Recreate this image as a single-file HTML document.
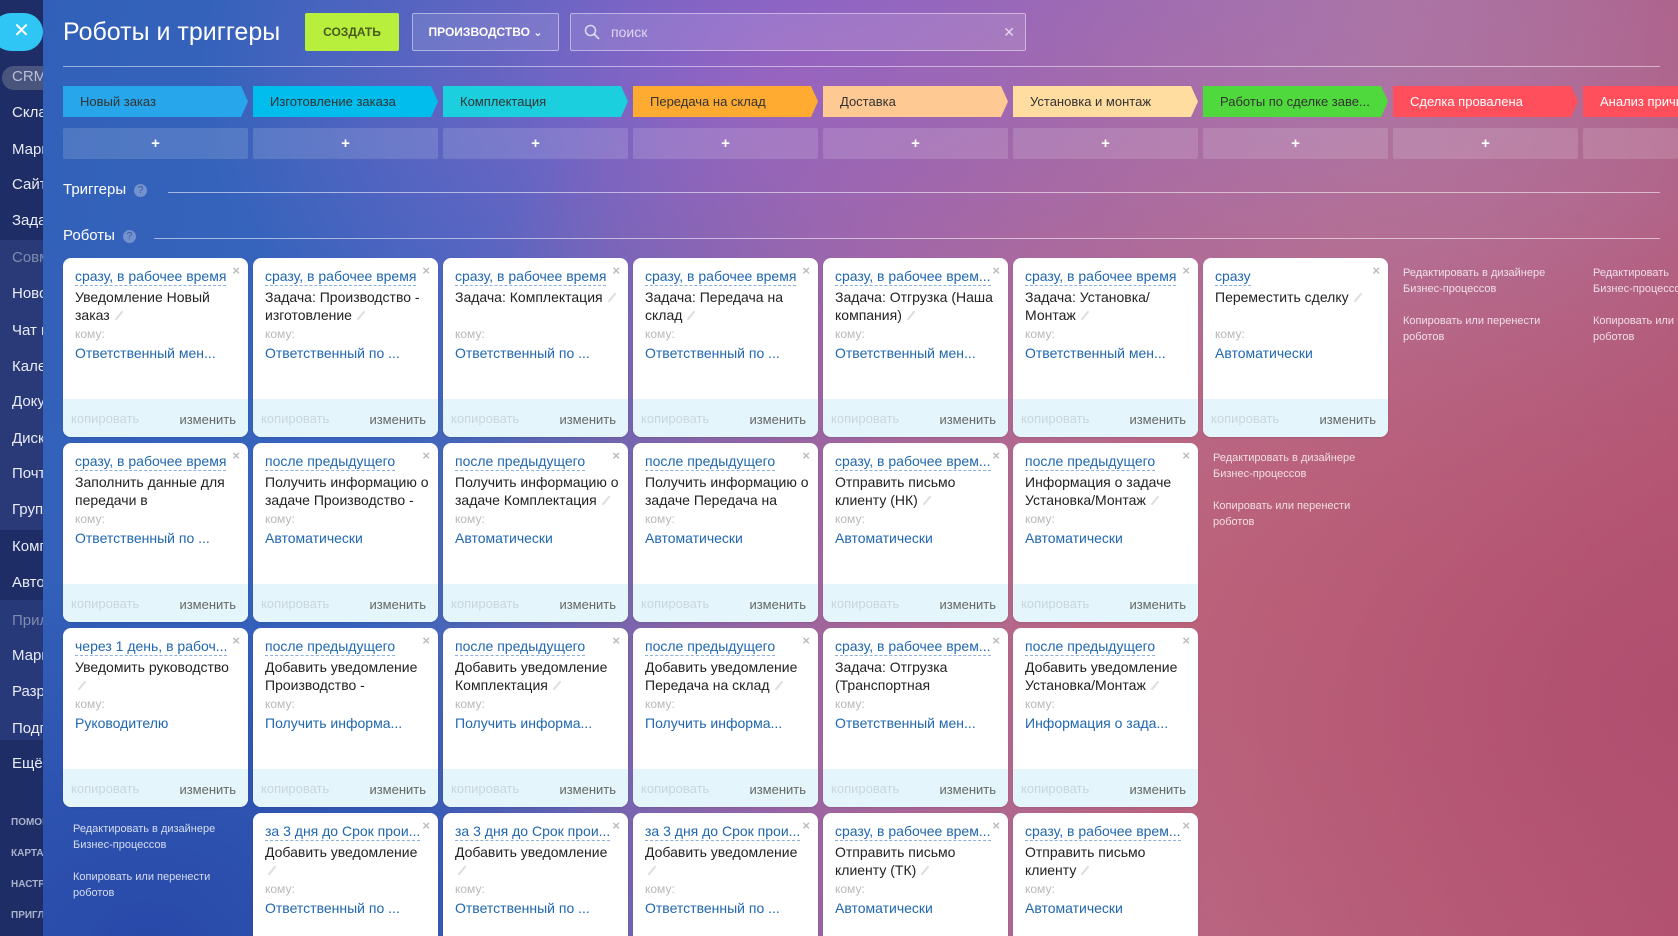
<!DOCTYPE html>
<html><head><meta charset="utf-8"><style>
*{margin:0;padding:0;box-sizing:border-box}
html,body{width:1678px;height:936px;overflow:hidden}
#w{position:absolute;left:0;top:0;width:1678px;height:936px;overflow:hidden;font-family:"Liberation Sans","DejaVu Sans",sans-serif;
background:
radial-gradient(ellipse 500px 400px at 150px 950px,#2848a8 0%,rgba(40,72,168,0) 100%),
radial-gradient(ellipse 700px 500px at 1700px 700px,#b04e6e 0%,rgba(176,78,110,0) 100%),
radial-gradient(ellipse 900px 700px at 1250px 600px,#c0687e 0%,rgba(192,104,126,0) 100%),
radial-gradient(ellipse 600px 400px at 800px 80px,#9464c6 0%,rgba(148,100,198,0) 100%),
radial-gradient(ellipse 600px 500px at 1300px 100px,#a37ab6 0%,rgba(163,122,182,0) 100%),
linear-gradient(100deg,#3160b8 0%,#3a66c0 30%,#7d62c0 50%,#b66a8a 75%,#b04e6e 100%);}
.sb{position:absolute;left:0;top:0;width:43px;height:936px;background:#1e2d66;overflow:hidden}
.sb .mid{position:absolute;left:0;top:240px;width:43px;height:290px;background:#2a3a78}
.sb .mid2{position:absolute;left:0;top:600px;width:43px;height:140px;background:#28397a}
.sb div.i{position:absolute;left:12px;color:#e8ecf6;font-size:15px;white-space:nowrap}
.sb div.d{color:#7f8ab0}
.sb div.s{font-size:10px;font-weight:bold;color:#a9b2cc;left:11px}
.crm{position:absolute;left:2px;top:66px;width:60px;height:24px;border-radius:12px;background:#4a557e}
.close{position:absolute;left:-8px;top:13px;width:51px;height:38px;border-radius:19px;background:#2fc6f6;color:#fff;font-size:20px;text-align:center;line-height:37px;padding-left:8px}
h1{position:absolute;left:63px;top:18px;font-weight:normal;color:#fff;font-size:25px}
.btn{position:absolute;top:13px;height:38px;border-radius:2px;font-size:12px;font-weight:bold;text-align:center;line-height:38px}
.create{left:305px;width:94px;background:#b7ef3c;color:#4a5a20}
.prod{left:412px;width:147px;border:1px solid rgba(255,255,255,.45);background:rgba(255,255,255,.12);color:#fff;line-height:36px}
.search{position:absolute;left:570px;top:13px;width:456px;height:38px;border:1px solid rgba(255,255,255,.45);background:rgba(255,255,255,.12);border-radius:2px;color:rgba(255,255,255,.7);font-size:14px;line-height:36px;padding-left:40px}
.hl{position:absolute;left:63px;right:18px;top:66px;height:1px;background:rgba(255,255,255,.5)}
.st{position:absolute;top:86px;height:31px;width:185px;font-size:13px;line-height:31px;padding-left:17px;color:#333;clip-path:polygon(0 0,178px 0,185px 50%,178px 100%,0 100%);white-space:nowrap;overflow:hidden}
.pl{position:absolute;top:128px;height:31px;width:185px;background:rgba(255,255,255,.14);border-radius:2px;color:#fff;text-align:center;line-height:31px;font-size:15px;font-weight:bold}
.sec{position:absolute;left:63px;color:#fff;font-size:15px}
.q{display:inline-block;width:13px;height:13px;border-radius:50%;background:rgba(255,255,255,.3);color:rgba(40,60,120,.7);font-size:10px;text-align:center;line-height:13px;vertical-align:1px;margin-left:8px}
.ln{position:absolute;height:1px;background:rgba(255,255,255,.55);right:18px}
.c{position:absolute;width:185px;height:179px;background:#fff;border-radius:8px;overflow:hidden;box-shadow:0 1px 2px rgba(0,0,0,.1)}
.c.b4{height:123px;border-radius:8px 8px 0 0}
.t{position:absolute;left:12px;top:9px;color:#2067b0;font-size:14px;border-bottom:1px dashed #8fb0d8;white-space:nowrap;line-height:18px}
.x{position:absolute;right:8px;top:5px;color:#bcbcbc;font-size:13px;font-weight:bold}
.n{position:absolute;left:12px;top:30px;width:170px;font-size:14px;line-height:18px;color:#222}
.p{display:inline-block;width:2px;height:11px;background:#ddd;transform:rotate(40deg);margin-left:8px;vertical-align:-1px}
.k{position:absolute;left:12px;top:69px;font-size:12px;color:#b8b8b8}
.v{position:absolute;left:12px;top:87px;font-size:14px;color:#2067b0;white-space:nowrap}
.f{position:absolute;left:0;right:0;bottom:0;height:38px;background:#e4f6fb;font-size:13px}
.f .a{position:absolute;left:8px;top:12px;color:#c8d6dc}
.f .b{position:absolute;right:12px;top:13px;color:#666}
.lk{position:absolute;font-size:11px;line-height:16px;color:rgba(255,255,255,.8);width:170px}
</style></head><body><div id="w">
<div class="sb">
<div class="mid"></div><div class="mid2"></div>
<div class="crm"></div>
<div class="i" style="top:68px;color:#b8bfd8">CRM</div>
<div class="i" style="top:104px">Склад</div>
<div class="i" style="top:141px">Маркетинг</div>
<div class="i" style="top:176px">Сайты</div>
<div class="i" style="top:212px">Задачи</div>
<div class="i d" style="top:249px">Совместная</div>
<div class="i" style="top:285px">Новости</div>
<div class="i" style="top:322px">Чат и звонки</div>
<div class="i" style="top:358px">Календарь</div>
<div class="i" style="top:393px">Документы</div>
<div class="i" style="top:430px">Диск</div>
<div class="i" style="top:465px">Почта</div>
<div class="i" style="top:501px">Группы</div>
<div class="i" style="top:538px">Компания</div>
<div class="i" style="top:574px">Автоматизация</div>
<div class="i d" style="top:612px">Приложения</div>
<div class="i" style="top:647px">Маркет</div>
<div class="i" style="top:683px">Разработчикам</div>
<div class="i" style="top:720px">Подписка</div>
<div class="i" style="top:755px">Ещё</div>
<div class="i s" style="top:817px">ПОМОЩЬ</div>
<div class="i s" style="top:848px">КАРТА</div>
<div class="i s" style="top:879px">НАСТРОЙКИ</div>
<div class="i s" style="top:910px">ПРИГЛАСИТЬ</div>
</div>
<div class="close">✕</div>
<h1>Роботы и триггеры</h1>
<div class="btn create">СОЗДАТЬ</div>
<div class="btn prod">ПРОИЗВОДСТВО <span style="font-size:11px">&#8964;</span></div>
<div class="search"><svg style="position:absolute;left:13px;top:10px" width="16" height="16" viewBox="0 0 16 16"><circle cx="6.5" cy="6.5" r="5" fill="none" stroke="rgba(255,255,255,.7)" stroke-width="1.6"/><line x1="10" y1="10" x2="15" y2="15" stroke="rgba(255,255,255,.7)" stroke-width="1.8"/></svg>поиск<span style="position:absolute;right:10px;top:0">✕</span></div>
<div class="hl"></div>

<div class="st" style="left:63px;background:#27a6ec">Новый заказ</div>
<div class="st" style="left:253px;background:#00bdee">Изготовление заказа</div>
<div class="st" style="left:443px;background:#1ccfde">Комплектация</div>
<div class="st" style="left:633px;background:#ffaa30">Передача на склад</div>
<div class="st" style="left:823px;background:#ffc994">Доставка</div>
<div class="st" style="left:1013px;background:#ffdda0">Установка и монтаж</div>
<div class="st" style="left:1203px;background:#4fd93c">Работы по сделке заве...</div>
<div class="st" style="left:1393px;background:#ff4f5d;color:#fff">Сделка провалена</div>
<div class="st" style="left:1583px;width:95px;background:#ff4f5d;color:#fff;clip-path:none">Анализ причин</div>

<div class="pl" style="left:63px">+</div><div class="pl" style="left:253px">+</div><div class="pl" style="left:443px">+</div><div class="pl" style="left:633px">+</div><div class="pl" style="left:823px">+</div><div class="pl" style="left:1013px">+</div><div class="pl" style="left:1203px">+</div><div class="pl" style="left:1393px">+</div><div class="pl" style="left:1583px;width:95px">&nbsp;</div>

<div class="sec" style="top:181px">Триггеры<span class="q">?</span></div>
<div class="ln" style="left:168px;top:192px"></div>
<div class="sec" style="top:227px">Роботы<span class="q">?</span></div>
<div class="ln" style="left:154px;top:238px"></div>

<div class="c" style="left:63px;top:258px"><div class="t">сразу, в рабочее время</div><div class="x">×</div><div class="n">Уведомление Новый заказ<span class="p"></span></div><div class="k">кому:</div><div class="v">Ответственный мен...</div><div class="f"><span class="a">копировать</span><span class="b">изменить</span></div></div>
<div class="c" style="left:253px;top:258px"><div class="t">сразу, в рабочее время</div><div class="x">×</div><div class="n">Задача: Производство - изготовление<span class="p"></span></div><div class="k">кому:</div><div class="v">Ответственный по ...</div><div class="f"><span class="a">копировать</span><span class="b">изменить</span></div></div>
<div class="c" style="left:443px;top:258px"><div class="t">сразу, в рабочее время</div><div class="x">×</div><div class="n">Задача: Комплектация<span class="p"></span></div><div class="k">кому:</div><div class="v">Ответственный по ...</div><div class="f"><span class="a">копировать</span><span class="b">изменить</span></div></div>
<div class="c" style="left:633px;top:258px"><div class="t">сразу, в рабочее время</div><div class="x">×</div><div class="n">Задача: Передача на склад<span class="p"></span></div><div class="k">кому:</div><div class="v">Ответственный по ...</div><div class="f"><span class="a">копировать</span><span class="b">изменить</span></div></div>
<div class="c" style="left:823px;top:258px"><div class="t">сразу, в рабочее врем...</div><div class="x">×</div><div class="n">Задача: Отгрузка (Наша компания)<span class="p"></span></div><div class="k">кому:</div><div class="v">Ответственный мен...</div><div class="f"><span class="a">копировать</span><span class="b">изменить</span></div></div>
<div class="c" style="left:1013px;top:258px"><div class="t">сразу, в рабочее время</div><div class="x">×</div><div class="n">Задача: Установка/<br>Монтаж<span class="p"></span></div><div class="k">кому:</div><div class="v">Ответственный мен...</div><div class="f"><span class="a">копировать</span><span class="b">изменить</span></div></div>
<div class="c" style="left:1203px;top:258px"><div class="t">сразу</div><div class="x">×</div><div class="n">Переместить сделку<span class="p"></span></div><div class="k">кому:</div><div class="v">Автоматически</div><div class="f"><span class="a">копировать</span><span class="b">изменить</span></div></div>
<div class="lk" style="left:1403px;top:265px">Редактировать в дизайнере Бизнес-процессов<br><br style="line-height:14px">Копировать или перенести роботов</div>
<div class="lk" style="left:1593px;top:265px;width:85px;white-space:nowrap;overflow:hidden">Редактировать<br>Бизнес-процессов<br><br style="line-height:14px">Копировать или<br>роботов</div>

<div class="c" style="left:63px;top:443px"><div class="t">сразу, в рабочее время</div><div class="x">×</div><div class="n">Заполнить данные для передачи в</div><div class="k">кому:</div><div class="v">Ответственный по ...</div><div class="f"><span class="a">копировать</span><span class="b">изменить</span></div></div>
<div class="c" style="left:253px;top:443px"><div class="t">после предыдущего</div><div class="x">×</div><div class="n">Получить информацию о задаче Производство -</div><div class="k">кому:</div><div class="v">Автоматически</div><div class="f"><span class="a">копировать</span><span class="b">изменить</span></div></div>
<div class="c" style="left:443px;top:443px"><div class="t">после предыдущего</div><div class="x">×</div><div class="n">Получить информацию о задаче Комплектация<span class="p"></span></div><div class="k">кому:</div><div class="v">Автоматически</div><div class="f"><span class="a">копировать</span><span class="b">изменить</span></div></div>
<div class="c" style="left:633px;top:443px"><div class="t">после предыдущего</div><div class="x">×</div><div class="n">Получить информацию о задаче Передача на</div><div class="k">кому:</div><div class="v">Автоматически</div><div class="f"><span class="a">копировать</span><span class="b">изменить</span></div></div>
<div class="c" style="left:823px;top:443px"><div class="t">сразу, в рабочее врем...</div><div class="x">×</div><div class="n">Отправить письмо клиенту (НК)<span class="p"></span></div><div class="k">кому:</div><div class="v">Автоматически</div><div class="f"><span class="a">копировать</span><span class="b">изменить</span></div></div>
<div class="c" style="left:1013px;top:443px"><div class="t">после предыдущего</div><div class="x">×</div><div class="n">Информация о задаче Установка/Монтаж<span class="p"></span></div><div class="k">кому:</div><div class="v">Автоматически</div><div class="f"><span class="a">копировать</span><span class="b">изменить</span></div></div>
<div class="lk" style="left:1213px;top:450px">Редактировать в дизайнере Бизнес-процессов<br><br style="line-height:14px">Копировать или перенести роботов</div>

<div class="c" style="left:63px;top:628px"><div class="t">через 1 день, в рабоч...</div><div class="x">×</div><div class="n">Уведомить руководство<br><span class="p" style="margin-left:6px"></span></div><div class="k">кому:</div><div class="v">Руководителю</div><div class="f"><span class="a">копировать</span><span class="b">изменить</span></div></div>
<div class="c" style="left:253px;top:628px"><div class="t">после предыдущего</div><div class="x">×</div><div class="n">Добавить уведомление Производство -</div><div class="k">кому:</div><div class="v">Получить информа...</div><div class="f"><span class="a">копировать</span><span class="b">изменить</span></div></div>
<div class="c" style="left:443px;top:628px"><div class="t">после предыдущего</div><div class="x">×</div><div class="n">Добавить уведомление Комплектация<span class="p"></span></div><div class="k">кому:</div><div class="v">Получить информа...</div><div class="f"><span class="a">копировать</span><span class="b">изменить</span></div></div>
<div class="c" style="left:633px;top:628px"><div class="t">после предыдущего</div><div class="x">×</div><div class="n">Добавить уведомление Передача на склад<span class="p"></span></div><div class="k">кому:</div><div class="v">Получить информа...</div><div class="f"><span class="a">копировать</span><span class="b">изменить</span></div></div>
<div class="c" style="left:823px;top:628px"><div class="t">сразу, в рабочее врем...</div><div class="x">×</div><div class="n">Задача: Отгрузка (Транспортная</div><div class="k">кому:</div><div class="v">Ответственный мен...</div><div class="f"><span class="a">копировать</span><span class="b">изменить</span></div></div>
<div class="c" style="left:1013px;top:628px"><div class="t">после предыдущего</div><div class="x">×</div><div class="n">Добавить уведомление Установка/Монтаж<span class="p"></span></div><div class="k">кому:</div><div class="v">Информация о зада...</div><div class="f"><span class="a">копировать</span><span class="b">изменить</span></div></div>

<div class="lk" style="left:73px;top:821px">Редактировать в дизайнере Бизнес-процессов<br><br style="line-height:14px">Копировать или перенести роботов</div>
<div class="c b4" style="left:253px;top:813px"><div class="t">за 3 дня до Срок прои...</div><div class="x">×</div><div class="n">Добавить уведомление<br><span class="p" style="margin-left:6px"></span></div><div class="k">кому:</div><div class="v">Ответственный по ...</div></div>
<div class="c b4" style="left:443px;top:813px"><div class="t">за 3 дня до Срок прои...</div><div class="x">×</div><div class="n">Добавить уведомление<br><span class="p" style="margin-left:6px"></span></div><div class="k">кому:</div><div class="v">Ответственный по ...</div></div>
<div class="c b4" style="left:633px;top:813px"><div class="t">за 3 дня до Срок прои...</div><div class="x">×</div><div class="n">Добавить уведомление<br><span class="p" style="margin-left:6px"></span></div><div class="k">кому:</div><div class="v">Ответственный по ...</div></div>
<div class="c b4" style="left:823px;top:813px"><div class="t">сразу, в рабочее врем...</div><div class="x">×</div><div class="n">Отправить письмо клиенту (ТК)<span class="p"></span></div><div class="k">кому:</div><div class="v">Автоматически</div></div>
<div class="c b4" style="left:1013px;top:813px"><div class="t">сразу, в рабочее врем...</div><div class="x">×</div><div class="n">Отправить письмо клиенту<span class="p"></span></div><div class="k">кому:</div><div class="v">Автоматически</div></div>
</div></body></html>
